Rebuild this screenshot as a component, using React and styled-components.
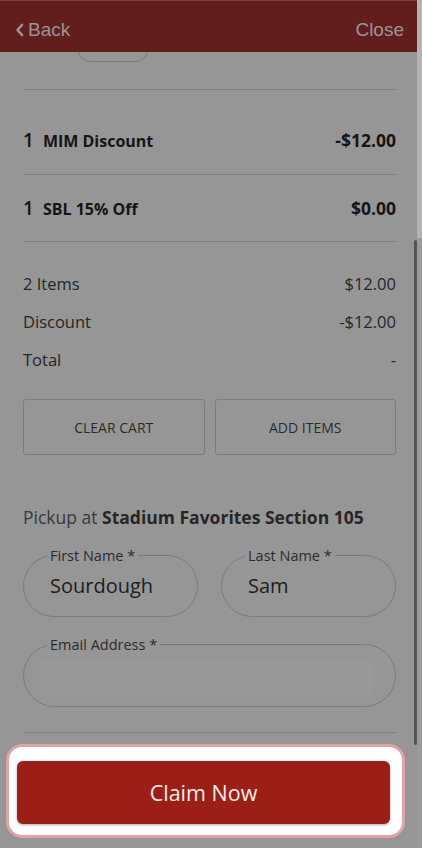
import React from 'react'
import styled, { createGlobalStyle } from 'styled-components'

const GlobalStyle = createGlobalStyle`
  html, body { margin: 0; padding: 0; }
  body {
    background: #9a9a9a;
    font-family: "Open Sans", "Noto Sans", sans-serif;
  }
  * { box-sizing: border-box; }
`

const Frame = styled.div`
  display: flex;
  width: 422px;
  height: 848px;
  overflow: hidden;
`

const Main = styled.div`
  position: relative;
  width: 417px;
  display: flex;
  flex-direction: column;
  background: #969696;
`

const Rail = styled.div`
  flex: 1;
  background: linear-gradient(#b3b3b3 0, #b3b3b3 238px, #9a9a9a 238px);
`

const Header = styled.header`
  height: 52px;
  flex-shrink: 0;
  display: flex;
  align-items: center;
  justify-content: space-between;
  padding: 7px 13px 0 14px;
  background: #611e1c;
  border-top: 1px solid #7a3c3a;
  font-family: "Liberation Sans", Arial, sans-serif;
  font-size: 19px;
  color: #9d9393;
`

const NavButton = styled.span`
  display: flex;
  align-items: center;
  gap: 2px;
`

const Scroll = styled.div`
  flex: 1;
  overflow: hidden;
  padding: 0 21px 0 23px;
`

const Stub = styled.div`
  height: 10px;
  overflow: hidden;
`

const Pill = styled.div`
  width: 70px;
  height: 30px;
  margin: -20px 0 0 55px;
  border: 1px solid #7a7a7a;
  border-radius: 12px;
`

const Divider = styled.div`
  height: 1px;
  background: #808080;
  margin-top: ${p => p.$gap || 0}px;
`

const ItemRow = styled.div`
  display: flex;
  align-items: center;
  justify-content: space-between;
  height: ${p => (p.$first ? 85 : 67)}px;
  padding-top: ${p => (p.$first ? 16 : 0)}px;
  border-bottom: 1px solid #808080;
  color: #151515;
  font-weight: 700;
`

const ItemName = styled.span`
  display: flex;
  align-items: baseline;
  gap: 9px;
  font-size: 16px;
`

const Qty = styled.span`
  font-size: 19px;
  font-weight: 600;
`

const ItemPrice = styled.span`
  font-size: 17.5px;
`

const Summary = styled.div`
  padding-top: 22px;
`

const SummaryRow = styled.div`
  display: flex;
  justify-content: space-between;
  align-items: center;
  height: 38px;
  font-size: 16.5px;
  color: #262626;
`

const ButtonRow = styled.div`
  display: grid;
  grid-template-columns: 1fr 1fr;
  gap: 10px;
  margin-top: 21px;
`

const OutlineButton = styled.button`
  height: 56px;
  border: 1px solid #7c7c7c;
  border-radius: 3px;
  background: transparent;
  font-family: "Open Sans", sans-serif;
  font-size: 14px;
  color: #2b2b2b;
  text-transform: uppercase;
`

const Pickup = styled.p`
  margin: 50px 0 0;
  font-size: 17.5px;
  line-height: 24px;
  color: #3a3a3a;

  strong {
    color: #262626;
    font-weight: 700;
  }
`

const FieldGrid = styled.div`
  display: grid;
  grid-template-columns: ${p => (p.$cols === 2 ? '1fr 1fr' : '1fr')};
  gap: 23px;
  margin-top: ${p => p.$gap}px;
`

const Field = styled.label`
  position: relative;
  display: block;
  height: ${p => p.$h || 62}px;
  border: 1px solid #7c7c7c;
  border-radius: 32px;
`

const FloatLabel = styled.span`
  position: absolute;
  top: -10px;
  left: 23px;
  padding: 0 3px;
  background: #969696;
  font-size: 14.5px;
  line-height: 20px;
  color: #2c2c2c;
`

const Value = styled.input`
  display: block;
  width: 100%;
  height: 100%;
  padding: 0 0 2px 26px;
  border: none;
  background: transparent;
  outline: none;
  font-family: "Open Sans", sans-serif;
  font-size: 20px;
  color: #202020;
`

const FilledInput = styled.input`
  display: block;
  width: calc(100% - 39px);
  height: 35px;
  margin: 16px 23px 0 16px;
  border: none;
  border-radius: 2px;
  background: #999999;
  outline: none;
`

const Footer = styled.div`
  height: 108px;
  flex-shrink: 0;
  padding: 4px 12px 10px 6px;
`

const Spotlight = styled.div`
  height: 94px;
  padding: 14px 12px 11px 8px;
  background: #fff;
  border: 3px solid #e2a3a2;
  border-radius: 16px;
`

const ClaimButton = styled.button`
  width: 100%;
  height: 63px;
  border: none;
  border-radius: 6px;
  background: #9c1f17;
  box-shadow: 0 1px 3px rgba(0, 0, 0, 0.35);
  font-family: "Open Sans", sans-serif;
  font-size: 21.5px;
  color: #f6ecea;
`

const Thumb = styled.div`
  position: absolute;
  top: 240px;
  right: 0;
  width: 3px;
  height: 505px;
  border-radius: 2px;
  background: #545454;
`

const items = [
  { qty: 1, name: 'MIM Discount', price: '-$12.00' },
  { qty: 1, name: 'SBL 15% Off', price: '$0.00' },
]

const totals = [
  ['2 Items', '$12.00'],
  ['Discount', '-$12.00'],
  ['Total', '-'],
]

export default function App() {
  return (
    <>
      <GlobalStyle />
      <Frame>
        <Main>
          <Header>
            <NavButton>
              <svg width="12" height="14" viewBox="0 0 12 14">
                <path d="M8 2 L3.5 7 L8 12" fill="none" stroke="#9d9393" strokeWidth="2.6" strokeLinecap="round" strokeLinejoin="round" />
              </svg>
              Back
            </NavButton>
            <NavButton>Close</NavButton>
          </Header>

          <Scroll>
            <Stub><Pill /></Stub>
            <Divider $gap={27} />
            {items.map((it, i) => (
              <ItemRow key={it.name} $first={i === 0}>
                <ItemName><Qty>{it.qty}</Qty>{it.name}</ItemName>
                <ItemPrice>{it.price}</ItemPrice>
              </ItemRow>
            ))}

            <Summary>
              {totals.map(([label, val]) => (
                <SummaryRow key={label}>
                  <span>{label}</span>
                  <span>{val}</span>
                </SummaryRow>
              ))}
            </Summary>

            <ButtonRow>
              <OutlineButton>Clear Cart</OutlineButton>
              <OutlineButton>Add Items</OutlineButton>
            </ButtonRow>

            <Pickup>Pickup at <strong>Stadium Favorites Section 105</strong></Pickup>

            <FieldGrid $cols={2} $gap={26}>
              <Field>
                <FloatLabel>First Name *</FloatLabel>
                <Value defaultValue="Sourdough" />
              </Field>
              <Field>
                <FloatLabel>Last Name *</FloatLabel>
                <Value defaultValue="Sam" />
              </Field>
            </FieldGrid>

            <FieldGrid $gap={27}>
              <Field $h={63}>
                <FloatLabel>Email Address *</FloatLabel>
                <FilledInput />
              </Field>
            </FieldGrid>

            <Divider $gap={25} />
          </Scroll>

          <Footer>
            <Spotlight>
              <ClaimButton>Claim Now</ClaimButton>
            </Spotlight>
          </Footer>

          <Thumb />
        </Main>
        <Rail />
      </Frame>
    </>
  )
}
